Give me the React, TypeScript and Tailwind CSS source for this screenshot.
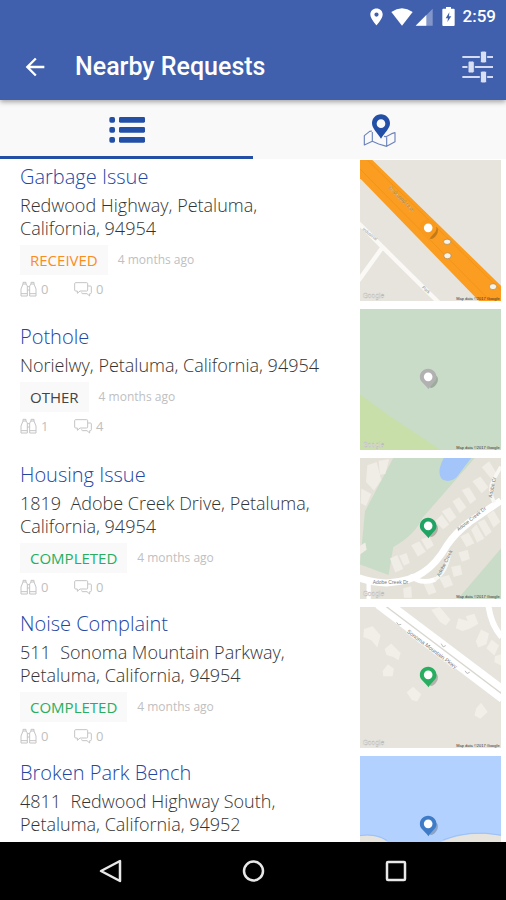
import React, { useState } from 'react';
import { MdArrowBack } from 'react-icons/md';

type Status = 'RECEIVED' | 'OTHER' | 'COMPLETED';

interface ServiceRequest {
  id: number;
  title: string;
  address: string;
  status: Status;
  age: string;
  watchers: number;
  comments: number;
  map: React.ReactNode;
}

const statusColors: Record<Status, string> = {
  RECEIVED: 'text-[#fb8c1e]',
  OTHER: 'text-[#444444]',
  COMPLETED: 'text-[#27ae60]',
};

const LocationIcon = () => (
  <svg viewBox="0 0 40 54" className="h-[18px] w-[13px]" fill="#fff" aria-hidden="true">
    <path
      fillRule="evenodd"
      d="M20 1C9 1 1 9 1 19.500C1 33 20 53 20 53S39 33 39 19.500C39 9 31 1 20 1ZM20 13a6.500 6.500 0 1 1 0 13a6.500 6.500 0 0 1 0-13Z"
    />
  </svg>
);

const WifiIcon = () => (
  <svg viewBox="0 0 66 54" className="h-[18px] w-[22px]" fill="#fff" aria-hidden="true">
    <path d="M1 12Q33-10 65 12L33 53Z" />
  </svg>
);

const SignalIcon = () => (
  <svg viewBox="0 0 54 54" className="h-[18px] w-[18px]" fill="#fff" aria-hidden="true">
    <path d="M2 53L53 2V53Z" opacity="0.35" />
    <path d="M2 53L34 21V53Z" />
  </svg>
);

const BatteryIcon = () => (
  <svg viewBox="0 0 39 57" className="h-[19px] w-[13px]" aria-hidden="true">
    <path d="M12 0H27V5H35Q38 5 38 8V54Q38 57 35 57H4Q1 57 1 54V8Q1 5 4 5H12Z" fill="#fff" />
    <path d="M22 16L11 34H18L16 45L28 28H21Z" fill="#405fad" />
  </svg>
);

const FilterIcon = () => (
  <svg viewBox="0 0 93 96" className="h-[32px] w-[31px]" aria-hidden="true">
    <path d="M1 18H93M1 48H93M1 78H93" stroke="#d5dcf0" strokeWidth="6" />
    <g fill="#d9dff2" stroke="#405fad" strokeWidth="3">
      <rect x="55" y="0" width="19" height="36" rx="5" />
      <rect x="18" y="30" width="19" height="36" rx="5" />
      <rect x="55" y="60" width="19" height="36" rx="5" />
    </g>
  </svg>
);

const ListIcon = () => (
  <svg viewBox="0 0 108 81" className="h-[27px] w-[36px]" fill="#2350a6" aria-hidden="true">
    <rect x="1" y="3" width="17" height="17" rx="5" />
    <rect x="30" y="3" width="78" height="17" rx="4" />
    <rect x="1" y="33" width="17" height="17" rx="5" />
    <rect x="30" y="33" width="78" height="17" rx="4" />
    <rect x="1" y="63" width="17" height="17" rx="5" />
    <rect x="30" y="63" width="78" height="17" rx="4" />
  </svg>
);

const MapIcon = () => (
  <svg viewBox="0 0 99 99" className="h-[33px] w-[33px]" aria-hidden="true">
    <path
      d="M27 51L20 52L4 65V93L28 82L47 90L71 97L96 83V56L86 59L69 68L63 67M28 54V82M71 70V97"
      fill="none"
      stroke="#6d84bd"
      strokeWidth="3.500"
      strokeLinejoin="round"
    />
    <path
      fillRule="evenodd"
      fill="#2350a6"
      d="M54 1C38 1 27 13 27 28C27 44 43 56 54 74C65 56 81 44 81 28C81 13 69 1 54 1ZM54 16a13 13 0 1 1 0 26a13 13 0 0 1 0-26Z"
    />
  </svg>
);

const BinocularsIcon = () => (
  <svg
    viewBox="0 0 51 48"
    className="h-[16px] w-[17px]"
    fill="none"
    stroke="#c4c4c4"
    strokeWidth="3"
    strokeLinejoin="round"
    aria-hidden="true"
  >
    <path d="M9 9V4H18V9L22 15V45H3V24L9 9ZM9 9H18M3 38H22" />
    <path d="M33 9V4H42V9L48 24V45H29V15L33 9ZM33 9H42M29 38H48M22 17H29M22 27H29" />
  </svg>
);

const CommentsIcon = () => (
  <svg
    viewBox="0 0 54 48"
    className="h-[16px] w-[18px]"
    fill="none"
    stroke="#c4c4c4"
    strokeWidth="3"
    strokeLinejoin="round"
    aria-hidden="true"
  >
    <path d="M5 5H38Q41 5 41 8V27Q41 30 38 30H18L10 37V30H5Q2 30 2 27V8Q2 5 5 5Z" />
    <path d="M42 15H49Q52 15 52 18V35Q52 38 49 38H47V45L39 38H26Q23 38 23 34" />
  </svg>
);

// All thumbnails share one 424 x 424 drawing area
const Thumbnail = ({
  label,
  background,
  pin,
  children,
}: {
  label: string;
  background: string;
  pin: string;
  children?: React.ReactNode;
}) => (
  <svg
    viewBox="0 0 424 424"
    className="block h-[141px] w-[141px] font-['Liberation_Sans',sans-serif]"
    role="img"
    aria-label={label}
  >
    <rect width="424" height="424" fill={background} />
    {children}
    <ellipse cx="220" cy="219" rx="12" ry="20" fill="#000" opacity="0.22" transform="rotate(30 220 219)" />
    <path d="M205 180C190 180 180 191 180 205C180 219 196 226 206 241C214 226 230 219 230 205C230 191 219 180 205 180Z" fill={pin} />
    <circle cx="205" cy="204" r="13" fill="#fff" />
    <text x="8" y="415" fontSize="20" fill="#fff" stroke="#b9b9b5" strokeWidth="1">
      Google
    </text>
    <text x="420" y="420" fontSize="12" fill="#333" textAnchor="end">
      Map data ©2017 Google
    </text>
  </svg>
);

const HighwayMap = (
  <Thumbnail label="Map of Redwood Highway" background="#e6e4dc" pin="#f79a1f">
    <path d="M-4 190L68 262L238 430M68 262L-4 362" stroke="#faf9f5" strokeWidth="13" fill="none" />
    <path d="M-5 -5H32L424 378V424H358L0 55Z" fill="#fa9d20" />
    <path d="M0 27L392 424M22 0L424 392" stroke="#ef8f18" strokeWidth="2" />
    <text x="84" y="84" fontSize="16" fill="#7c5b2c" stroke="#ffd9a0" strokeWidth="0.5" transform="rotate(45 84 84)">
      Redwood Hwy
    </text>
    <text x="6" y="210" fontSize="13" fill="#999" transform="rotate(38 6 210)">
      Industrial
    </text>
    <text x="186" y="384" fontSize="13" fill="#888" transform="rotate(44 186 384)">
      Park
    </text>
    <g fill="#f6f2e7" stroke="#a9854c" strokeWidth="2">
      <ellipse cx="262" cy="246" rx="11" ry="8" />
      <ellipse cx="263" cy="288" rx="11" ry="9" />
      <ellipse cx="400" cy="381" rx="11" ry="9" />
    </g>
  </Thumbnail>
);

const ParkMap = (
  <Thumbnail label="Map of Norielwy" background="#c9dcc8" pin="#b1b1b1">
    <path d="M0 257L100 329L243 424H0Z" fill="#c8dfaa" />
  </Thumbnail>
);

const CreekMap = (
  <Thumbnail label="Map of Adobe Creek Drive" background="#e4e1d9" pin="#1fa463">
    <path d="M100 0H345L188 180Q165 232 100 268L86 352L0 320V315L15 160Z" fill="#c9dcc8" />
    <path d="M424 272V424H294Z" fill="#c9dcc8" />
    <path d="M252 0Q228 44 248 65Q272 76 292 56L334 0Z" fill="#a3c5fa" />
    <g fill="#efede5">
      <path d="M22 22L50 12L64 66L42 98L18 72Z" />
      <path d="M56 8L88 4L76 48L60 50Z" />
      <path d="M4 92L34 108L18 144L2 136Z" />
      <path d="M0 264L16 254L20 276L0 290Z" />
      <path d="M90 302L112 292L130 334L106 344ZM118 294L140 286L150 316L132 324Z" />
      <path d="M154 262L178 250L198 282L174 296ZM184 244L208 236L222 262L202 276Z" />
      <path d="M226 190L246 170L268 200L250 214ZM246 160L270 148L290 178L270 194Z" />
      <path d="M278 130L298 118L320 148L300 166ZM306 96L328 88L350 124L332 138Z" />
      <path d="M338 70L362 56L386 88L366 106ZM366 28L388 10L410 44L394 62Z" />
      <path d="M334 216L350 200L374 242L352 254ZM354 194L374 184L396 222L378 236ZM382 172L402 158L422 192L402 210Z" />
      <path d="M302 236L326 224L344 256L320 268ZM296 284L324 276L330 304L306 312Z" />
      <path d="M274 328L302 322L308 350L282 358ZM238 360L268 352L280 382L254 392ZM190 376L216 370L230 404L206 412Z" />
      <path d="M130 392L154 386L156 420H132Z" />
    </g>
    <path d="M-5 360Q36 374 80 376Q150 372 190 344Q230 318 262 262Q288 224 330 192L424 128" stroke="#fff" strokeWidth="21" fill="none" />
    <path d="M156 356Q180 380 224 366" stroke="#fff" strokeWidth="14" fill="none" strokeLinecap="round" />
    <path d="M224 366Q262 344 270 280M404 134Q384 100 402 64L424 26" stroke="#f8f7f3" strokeWidth="11" fill="none" />
    <path d="M26 370V424" stroke="#fff" strokeWidth="13" />
    <g fill="#777" fontSize="15">
      <text x="38" y="380">Adobe Creek Dr</text>
      <text x="296" y="220" transform="rotate(-38 296 220)">Adobe Creek Dr</text>
      <text x="240" y="358" transform="rotate(-64 240 358)">Adobe Creek</text>
      <text x="396" y="120" transform="rotate(-78 396 120)">Adobe Cr</text>
    </g>
  </Thumbnail>
);

const ParkwayMap = (
  <Thumbnail label="Map of Sonoma Mountain Parkway" background="#e6e4dc" pin="#27ae60">
    <g fill="#f1efe8">
      <path d="M12 66L38 58L62 86L52 122L34 100L10 90Z" />
      <path d="M74 126L94 110L122 138L116 160L100 150L80 144Z" />
      <path d="M68 192L84 172L102 186L98 208L70 208Z" />
      <path d="M140 256L160 240L184 262L172 284L156 280Z" />
      <path d="M350 304L364 288L384 316L362 336L344 326Z" />
      <path d="M214 8L240 0L272 38L258 56L240 44Z" />
      <path d="M288 64L296 34L324 42L318 28L344 20L356 50L328 66L308 72Z" />
      <path d="M348 104L364 68L388 80L380 112L356 122ZM380 124L396 98L418 116L404 146Z" />
      <path d="M406 148L424 142V176L404 166Z" />
    </g>
    <path d="M54 -8L428 276" stroke="#fff" strokeWidth="25" />
    <path d="M90 -8L428 247" stroke="#fff" strokeWidth="23" />
    <path d="M70 -8L428 262" stroke="#d9d7d0" strokeWidth="4" />
    <path d="M386 -5Q394 54 426 90" stroke="#fff" strokeWidth="18" fill="none" />
    <text x="140" y="76" fontSize="17" fill="#777" stroke="#fff" strokeWidth="4" paintOrder="stroke" transform="rotate(37 140 76)">
      Sonoma Mountain Pkwy
    </text>
    <path d="M110 46L116 54L124 52M244 110L250 120L258 116M316 192L322 200L330 196" stroke="#bbb" strokeWidth="3" fill="none" />
  </Thumbnail>
);

const LakeMap = (
  <Thumbnail label="Map of Redwood Highway South" background="#b3d1ff" pin="#3f7cc8">
    <path d="M0 241Q48 234 82 258V424H0Z" fill="#e6e4dc" />
    <path d="M244 258Q330 222 424 240V424H244Z" fill="#e6e4dc" />
    <path d="M0 239Q48 232 82 254M250 252Q330 220 424 238" stroke="#9dc0f5" strokeWidth="3" fill="none" />
  </Thumbnail>
);

const requests: ServiceRequest[] = [
  {
    id: 1,
    title: 'Garbage Issue',
    address: 'Redwood Highway, Petaluma, California, 94954',
    status: 'RECEIVED',
    age: '4 months ago',
    watchers: 0,
    comments: 0,
    map: HighwayMap,
  },
  {
    id: 2,
    title: 'Pothole',
    address: 'Norielwy, Petaluma, California, 94954',
    status: 'OTHER',
    age: '4 months ago',
    watchers: 1,
    comments: 4,
    map: ParkMap,
  },
  {
    id: 3,
    title: 'Housing Issue',
    address: '1819  Adobe Creek Drive, Petaluma, California, 94954',
    status: 'COMPLETED',
    age: '4 months ago',
    watchers: 0,
    comments: 0,
    map: CreekMap,
  },
  {
    id: 4,
    title: 'Noise Complaint',
    address: '511  Sonoma Mountain Parkway, Petaluma, California, 94954',
    status: 'COMPLETED',
    age: '4 months ago',
    watchers: 0,
    comments: 0,
    map: ParkwayMap,
  },
  {
    id: 5,
    title: 'Broken Park Bench',
    address: '4811  Redwood Highway South, Petaluma, California, 94952',
    status: 'RECEIVED',
    age: '4 months ago',
    watchers: 0,
    comments: 0,
    map: LakeMap,
  },
];

const RequestRow = ({ request }: { request: ServiceRequest }) => (
  <li className="flex items-center pr-[5px] pl-5">
    <div className="min-w-0 flex-1 pr-7">
      <h2 className="text-[20px] leading-[28px] font-light text-[#2347a3]">{request.title}</h2>
      <p className="mt-[3px] text-[18px] leading-[23px] font-light whitespace-pre-wrap text-[#333333]">
        {request.address}
      </p>
      <div className="mt-[5px] flex items-center gap-[10px]">
        <span className={`bg-[#f9f9f9] px-[10px] text-[15px] leading-[30px] ${statusColors[request.status]}`}>
          {request.status}
        </span>
        <span className="text-[12px] leading-[30px] text-[#c0c0c0]">{request.age}</span>
      </div>
      <div className="mt-1 flex text-[13px] leading-[20px] text-[#c0c0c0]">
        <span className="flex w-[54px] items-center gap-1">
          <BinocularsIcon />
          {request.watchers}
        </span>
        <span className="flex items-center gap-1">
          <CommentsIcon />
          {request.comments}
        </span>
      </div>
    </div>
    {request.map}
  </li>
);

const App: React.FC = () => {
  const [tab, setTab] = useState<'list' | 'map'>('list');

  return (
    <div className="flex h-screen flex-col bg-white font-['Open_Sans',sans-serif]">
      <header className="z-10 bg-[#405fad] font-[Roboto,sans-serif] text-white shadow-[0_2px_5px_rgba(0,0,0,0.35)]">
        <div className="flex h-[33px] items-center justify-end pr-[10px]">
          <LocationIcon />
          <span className="ml-2 flex gap-[2px]">
            <WifiIcon />
            <SignalIcon />
          </span>
          <span className="mr-2 ml-[9px]">
            <BatteryIcon />
          </span>
          <span className="text-[17px] leading-none font-medium">2:59</span>
        </div>
        <div className="flex h-[67px] items-center pr-[13px] pl-[21px]">
          <button type="button" aria-label="Back">
            <MdArrowBack className="h-7 w-7" />
          </button>
          <h1 className="ml-[26px] flex-1 text-[25px] font-medium">Nearby Requests</h1>
          <button type="button" aria-label="Filter requests">
            <FilterIcon />
          </button>
        </div>
      </header>

      <div role="tablist" className="flex h-[59px] shrink-0 bg-[#f9f9f9]">
        <button
          type="button"
          role="tab"
          aria-label="List"
          aria-selected={tab === 'list'}
          onClick={() => setTab('list')}
          className={`flex flex-1 items-center justify-center border-b-3 pt-[2px] ${tab === 'list' ? 'border-[#2350a6]' : 'border-transparent'}`}
        >
          <ListIcon />
        </button>
        <button
          type="button"
          role="tab"
          aria-label="Map"
          aria-selected={tab === 'map'}
          onClick={() => setTab('map')}
          className={`flex flex-1 items-center justify-center border-b-3 pt-[4px] ${tab === 'map' ? 'border-[#2350a6]' : 'border-transparent'}`}
        >
          <MapIcon />
        </button>
      </div>

      <main className="min-h-0 flex-1 overflow-y-auto [scrollbar-width:none]">
        <ul className="flex flex-col gap-2 pt-[1px]">
          {requests.map((request) => (
            <RequestRow key={request.id} request={request} />
          ))}
        </ul>
      </main>

      <nav className="flex h-[58px] shrink-0 items-center justify-center gap-[119px] bg-black">
        <button type="button" aria-label="Go back">
          <svg viewBox="0 0 24 24" className="h-6 w-6" fill="none" stroke="#e8e8e8" strokeWidth="2.500" strokeLinejoin="round">
            <path d="M22 2V22L3 12Z" />
          </svg>
        </button>
        <button type="button" aria-label="Home">
          <svg viewBox="0 0 24 24" className="h-6 w-6" fill="none" stroke="#e8e8e8" strokeWidth="2.500">
            <circle cx="12.500" cy="12" r="9.500" />
          </svg>
        </button>
        <button type="button" aria-label="Recent apps">
          <svg viewBox="0 0 24 24" className="h-6 w-6" fill="none" stroke="#e8e8e8" strokeWidth="2.500" strokeLinejoin="round">
            <rect x="3" y="3" width="18" height="18" rx="1" />
          </svg>
        </button>
      </nav>
    </div>
  );
};

export default App;
